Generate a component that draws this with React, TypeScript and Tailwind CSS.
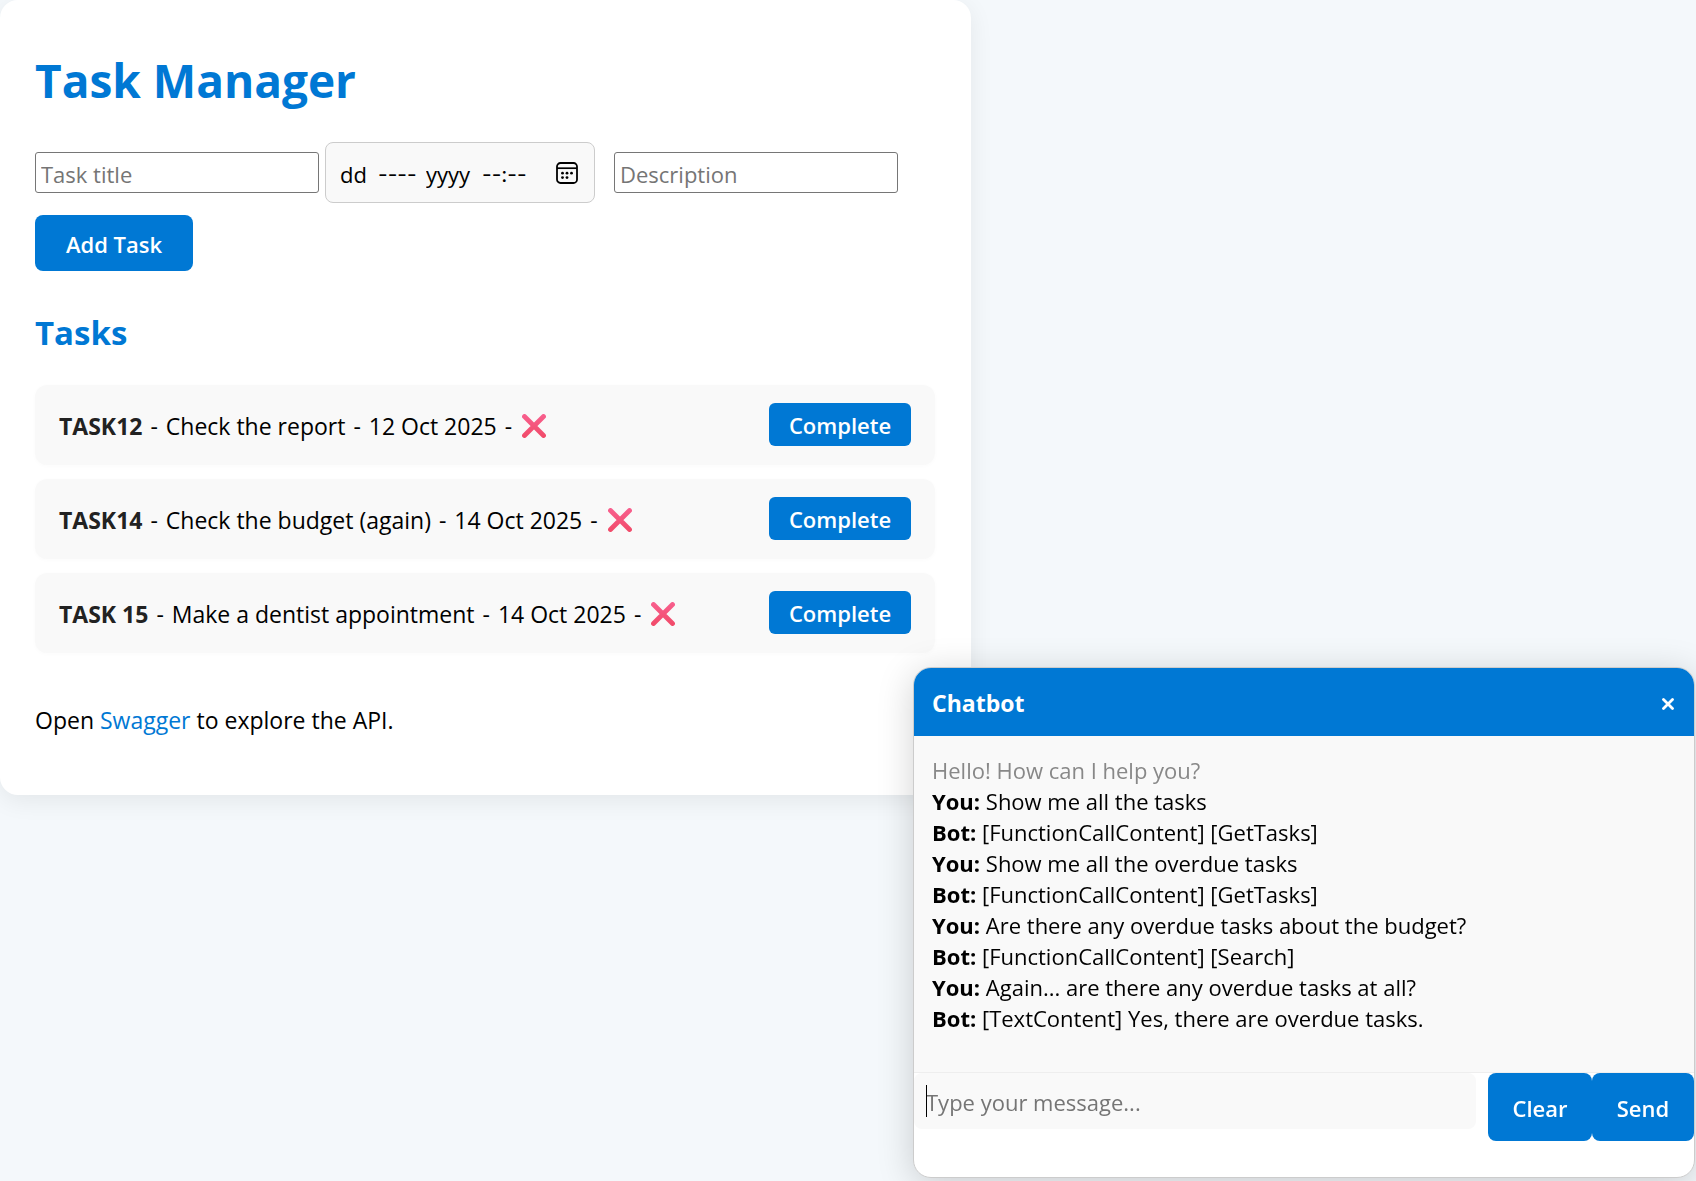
import { useState } from 'react'

const tasks = [
  { name: 'TASK12', text: 'Check the report', due: '12 Oct 2025' },
  { name: 'TASK14', text: 'Check the budget (again)', due: '14 Oct 2025' },
  { name: 'TASK 15', text: 'Make a dentist appointment', due: '14 Oct 2025' },
]

const messages = [
  { who: 'You', text: 'Show me all the tasks' },
  { who: 'Bot', text: '[FunctionCallContent] [GetTasks]' },
  { who: 'You', text: 'Show me all the overdue tasks' },
  { who: 'Bot', text: '[FunctionCallContent] [GetTasks]' },
  { who: 'You', text: 'Are there any overdue tasks about the budget?' },
  { who: 'Bot', text: '[FunctionCallContent] [Search]' },
  { who: 'You', text: 'Again... are there any overdue tasks at all?' },
  { who: 'Bot', text: '[TextContent] Yes, there are overdue tasks.' },
]

function CrossMark() {
  return (
    <svg role="img" aria-label="Not completed" viewBox="0 0 24 24" className="ml-2 inline-block size-6 shrink-0">
      <defs>
        <linearGradient id="cross" x1="0" y1="0" x2="0" y2="24" gradientUnits="userSpaceOnUse">
          <stop offset="0" stopColor="#f8608f" />
          <stop offset="1" stopColor="#f14a68" />
        </linearGradient>
      </defs>
      <path d="M2.5 2.5 21.5 21.5M21.5 2.5 2.5 21.5" stroke="url(#cross)" strokeWidth="4.8" strokeLinecap="round" />
    </svg>
  )
}

function CalendarIcon() {
  return (
    <svg viewBox="0 0 22 22" className="size-[22px]" fill="none" aria-hidden="true">
      <rect x="1" y="1" width="20" height="20" rx="3.5" stroke="#000" strokeWidth="1.8" />
      <path d="M1 6.2h20" stroke="#000" strokeWidth="1.7" />
      <g fill="#000">
        <circle cx="6.5" cy="11.2" r="1.4" />
        <circle cx="11" cy="11.2" r="1.4" />
        <circle cx="15.5" cy="11.2" r="1.4" />
        <circle cx="6.5" cy="15.6" r="1.4" />
        <circle cx="11" cy="15.6" r="1.4" />
      </g>
    </svg>
  )
}

function Dash() {
  return <span className="mx-0.5"> - </span>
}

function TaskManager() {
  return (
    <main className="w-full max-w-[971px] rounded-[18px] bg-white pt-[45px] pr-9 pb-[59px] pl-[35px] shadow-[0_6px_24px_rgba(0,0,0,0.07)]">
      <h1 className="text-[46px] leading-[70px] font-bold text-[#0078d4]">Task Manager</h1>
      <form className="mt-[27px] flex flex-wrap items-center gap-y-3 text-[22px]" onSubmit={(e) => e.preventDefault()}>
        <input
          aria-label="Task title"
          placeholder="Task title"
          className="mr-1.5 h-[41px] w-[284px] rounded-[3px] border border-[#767676] bg-white px-[5px] pt-0.5 placeholder:text-[#757575]"
        />
        <div
          role="group"
          aria-label="Due date"
          className="mr-[19px] flex h-[61px] w-[270px] items-center gap-2 rounded-lg border border-[#ccc] bg-[#f9f9f9] pr-4 pl-3.5"
        >
          <input aria-label="Day" defaultValue="dd" className="w-[30px] bg-transparent pt-1" />
          <input aria-label="Month" defaultValue="----" className="w-10 bg-transparent pt-1 font-['Inter',sans-serif] text-[21px]" />
          <input aria-label="Year" defaultValue="yyyy" className="w-12 bg-transparent pt-1" />
          <input aria-label="Time" defaultValue="--:--" className="w-[50px] bg-transparent pt-1 font-['Inter',sans-serif] text-[21px]" />
          <button type="button" aria-label="Pick a date" className="ml-auto">
            <CalendarIcon />
          </button>
        </div>
        <input
          aria-label="Description"
          placeholder="Description"
          className="mr-9 h-[41px] w-[284px] rounded-[3px] border border-[#767676] bg-white px-[5px] pt-0.5 placeholder:text-[#757575]"
        />
        <button type="submit" className="h-14 w-[158px] rounded-lg bg-[#0078d4] pt-0.5 font-semibold text-white">
          Add Task
        </button>
      </form>
      <h2 className="mt-[37px] text-[33px] leading-[50px] font-bold text-[#0078d4]">Tasks</h2>
      <ul className="mt-[27px] flex flex-col gap-3.5">
        {tasks.map((t) => (
          <li
            key={t.name}
            className="flex h-20 items-center justify-between rounded-xl bg-[#f9f9f9] px-6 shadow-[0_1px_5px_rgba(0,0,0,0.02)]"
          >
            <span className="flex items-center pt-0.5">
              <span>
                <strong className="font-bold text-[#222]">{t.name}</strong>
                <Dash />
                {t.text}
                <Dash />
                {t.due}
                <Dash />
              </span>
              <CrossMark />
            </span>
            <button className="mb-0.5 h-[43px] w-[142px] rounded-md bg-[#0078d4] pt-0.5 text-[22px] font-semibold text-white">
              Complete
            </button>
          </li>
        ))}
      </ul>
      <p className="mt-[51px] leading-8">
        Open{' '}
        <a href="#swagger" className="text-[#0078d4]">
          Swagger
        </a>{' '}
        to explore the API.
      </p>
    </main>
  )
}

function Chatbot() {
  const [draft, setDraft] = useState('')
  return (
    <section
      aria-label="Chatbot"
      className="fixed right-px bottom-[3px] flex w-[782px] max-w-full flex-col overflow-hidden rounded-[18px] border border-[#ccc] bg-white text-[22px] shadow-[0_6px_36px_rgba(0,0,0,0.18)]"
    >
      <header className="flex h-[68px] items-center justify-between bg-[#0078d4] px-[18px] pt-0.5 text-[23px] font-bold text-white">
        <span>Chatbot</span>
        <button aria-label="Close" className="p-0.5 pt-1">
          <svg viewBox="0 0 12 12" className="size-3" aria-hidden="true">
            <path d="M1.5 1.5l9 9M10.5 1.5l-9 9" stroke="#fff" strokeWidth="2.8" strokeLinecap="round" />
          </svg>
        </button>
      </header>
      <div className="min-h-[337px] border-b border-[#eee] bg-[#f9f9f9] px-[18px] pt-[19px] pb-9 leading-[31px]">
        <p className="text-[#888]">Hello! How can I help you?</p>
        {messages.map((m, i) => (
          <p key={i}>
            <strong className="font-bold">{m.who}:</strong> {m.text}
          </p>
        ))}
      </div>
      <form className="flex items-start pb-9" onSubmit={(e) => e.preventDefault()}>
        <div className="relative mr-3 min-w-0 flex-1">
          <input
            aria-label="Message"
            placeholder="Type your message..."
            value={draft}
            onChange={(e) => setDraft(e.target.value)}
            className="h-14 w-full rounded-lg bg-[#f9f9f9] px-3 pt-0.5 placeholder:text-[#757575]"
          />
          <span className="pointer-events-none absolute top-3 left-3 h-8 w-px bg-black" />
        </div>
        <button
          type="button"
          onClick={() => setDraft('')}
          className="h-[68px] w-[104px] rounded-lg bg-[#0078d4] pt-0.5 font-semibold text-white"
        >
          Clear
        </button>
        <button type="submit" className="h-[68px] w-[102px] rounded-lg bg-[#0078d4] pt-0.5 font-semibold text-white">
          Send
        </button>
      </form>
    </section>
  )
}

export default function App() {
  return (
    <div className="min-h-screen bg-[#f4f8fb] font-['Segoe_UI','Open_Sans',sans-serif] text-[23px] text-black">
      <TaskManager />
      <Chatbot />
    </div>
  )
}
